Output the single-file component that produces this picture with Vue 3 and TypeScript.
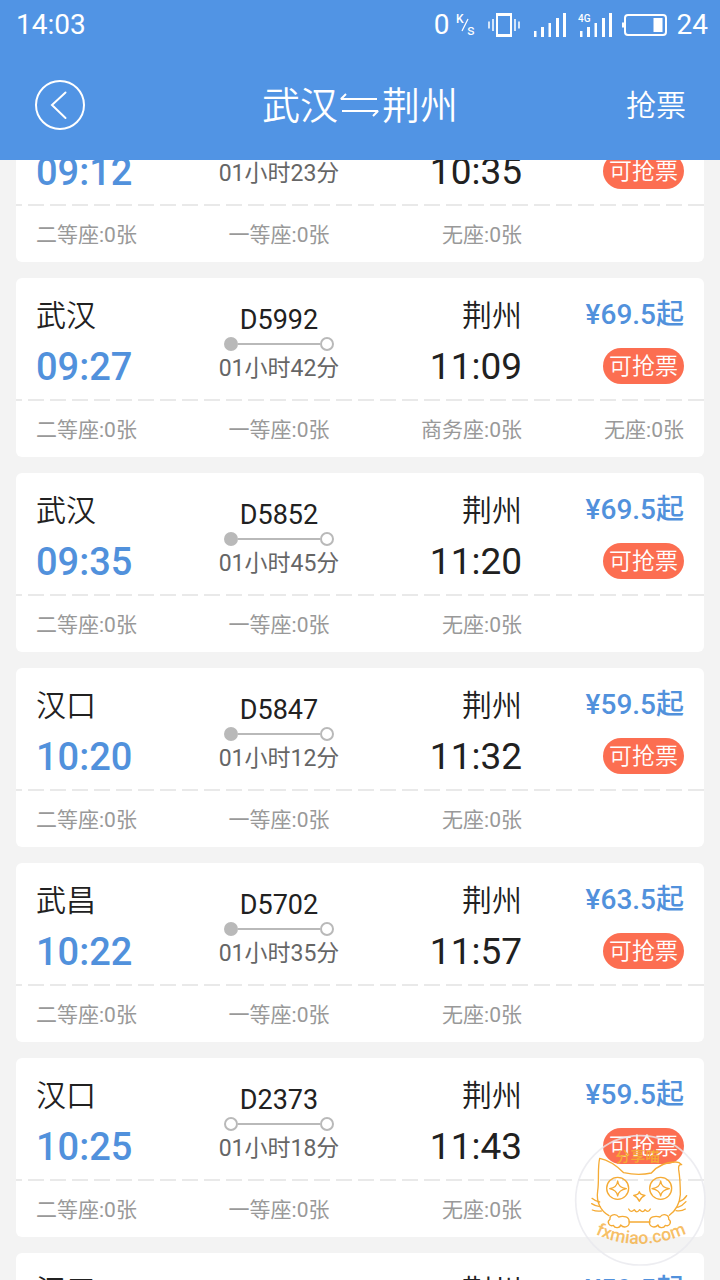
<script setup lang="ts">
import { onMounted, ref } from 'vue'

interface Train {
  from: string
  depart: string
  code: string
  duration: string
  to: string
  arrive: string
  price: string
  seats: string[]
  startsHere: boolean
}

const common = ['二等座:0张', '一等座:0张', '无座:0张']

const trains: Train[] = [
  { from: '武汉', depart: '09:12', code: 'D5986', duration: '01小时23分', to: '荆州', arrive: '10:35', price: '69.5', seats: common, startsHere: true },
  { from: '武汉', depart: '09:27', code: 'D5992', duration: '01小时42分', to: '荆州', arrive: '11:09', price: '69.5', seats: ['二等座:0张', '一等座:0张', '商务座:0张', '无座:0张'], startsHere: true },
  { from: '武汉', depart: '09:35', code: 'D5852', duration: '01小时45分', to: '荆州', arrive: '11:20', price: '69.5', seats: common, startsHere: true },
  { from: '汉口', depart: '10:20', code: 'D5847', duration: '01小时12分', to: '荆州', arrive: '11:32', price: '59.5', seats: common, startsHere: true },
  { from: '武昌', depart: '10:22', code: 'D5702', duration: '01小时35分', to: '荆州', arrive: '11:57', price: '63.5', seats: common, startsHere: true },
  { from: '汉口', depart: '10:25', code: 'D2373', duration: '01小时18分', to: '荆州', arrive: '11:43', price: '59.5', seats: common, startsHere: false },
  { from: '汉口', depart: '10:31', code: 'D3073', duration: '01小时20分', to: '荆州', arrive: '11:51', price: '59.5', seats: common, startsHere: false },
]

const list = ref<HTMLElement | null>(null)
const initialScroll = 93

onMounted(() => {
  if (list.value) list.value.scrollTop = initialScroll
})
</script>

<template>
  <div class="app">
    <header class="header">
      <div class="status">
        <span class="clock">14:03</span>
        <div class="indicators">
          <span>0</span>
          <svg class="rate" width="20" height="26" viewBox="0 0 20 26">
            <text x="0" y="11" font-size="12" font-weight="500">K</text>
            <path d="M6 19 12 7" stroke="currentColor" stroke-width="1.3" />
            <text x="11" y="23" font-size="15">s</text>
          </svg>
          <svg class="vibrate" width="32" height="26" viewBox="0 0 32 26" fill="none" stroke="currentColor">
            <rect x="9" y="2" width="14" height="22" stroke-width="2" />
            <path d="M8 2.500h16M8 23.500h16" stroke-width="3" />
            <path d="M1 9.500v7M5 7v12M27 7v12M31 9.500v7" stroke-width="1.500" />
          </svg>
          <svg class="signal" width="32" height="26" viewBox="0 0 32 26" fill="currentColor">
            <path d="M0 19h2.500v6H0zM7 15h3v10H7zM14.500 11h2.500v14h-2.500zM22 6h3v19h-3zM29 1h3v24h-3z" />
          </svg>
          <svg class="signal-4g" width="34" height="26" viewBox="0 0 34 26" fill="currentColor">
            <path d="M2 19h2.500v6H2zM9 15h3v10H9zM16.500 11h2.500v14h-2.500zM24 6h3v19h-3zM31 1h3v24h-3z" />
            <text x="0" y="10" font-size="10" font-weight="500">4G</text>
          </svg>
          <svg class="battery" width="46" height="24" viewBox="0 0 46 24">
            <rect x="3" y="2" width="41" height="20" rx="3" fill="none" stroke="currentColor" stroke-width="2" />
            <path d="M0 9.500h2v5H0zM31.500 5h9v14h-9z" fill="currentColor" />
          </svg>
          <span>24</span>
        </div>
      </div>
      <nav class="nav">
        <button class="back" type="button" aria-label="返回">
          <svg width="52" height="52" viewBox="0 0 52 52" fill="none" stroke="currentColor" stroke-width="2">
            <circle cx="26" cy="26" r="24" />
            <path d="M31.500 13.500 18 26l13.500 13" stroke-linecap="round" />
          </svg>
        </button>
        <h1 class="title">
          <span>武汉</span>
          <svg width="40" height="26" viewBox="0 0 40 26" fill="none" stroke="currentColor" stroke-width="2" stroke-linejoin="bevel">
            <path d="M37 6H1L6 1M2 18h36l-5 5" />
          </svg>
          <span>荆州</span>
        </h1>
        <button class="grab" type="button">抢票</button>
      </nav>
    </header>

    <main ref="list" class="list">
      <article v-for="train in trains" :key="train.depart" class="card">
        <div class="trip">
          <div class="stop">
            <div class="city">{{ train.from }}</div>
            <div class="time depart">{{ train.depart }}</div>
          </div>
          <div class="route">
            <div class="code">{{ train.code }}</div>
            <div class="track">
              <i class="dot" :class="{ filled: train.startsHere }"></i>
              <i class="rail"></i>
              <i class="dot"></i>
            </div>
            <div class="duration">{{ train.duration }}</div>
          </div>
          <div class="stop end">
            <div class="city">{{ train.to }}</div>
            <div class="time arrive">{{ train.arrive }}</div>
          </div>
          <div class="fare">
            <div class="price">¥{{ train.price }}起</div>
            <button class="badge" type="button">可抢票</button>
          </div>
        </div>
        <div class="divider"></div>
        <div class="seats">
          <span v-for="seat in train.seats" :key="seat">{{ seat }}</span>
        </div>
      </article>
    </main>

    <svg class="mascot" width="160" height="160" viewBox="0 0 480 480" fill="none" stroke="#f5ab35" stroke-width="4" stroke-linecap="round" stroke-linejoin="round" aria-hidden="true">
      <defs>
        <path id="mascot-top" d="M168 129Q238 120 330 129" />
        <path id="mascot-bottom" d="M106 342Q240 404 390 336" />
      </defs>
      <circle cx="241" cy="241" r="194" stroke="#e9e9ee" stroke-opacity=".8" stroke-width="5" />
      <path d="M147 287C122 273 108 246 113 213C118 180 112 145 119 115C145 120 169 136 191 158Q235 168 274 159C294 136 319 126 345 126Q357 125 365 134Q354 132 356 149C360 174 361 200 361 224C359 252 347 272 328 286M208 306H270" />
      <circle cx="173" cy="205" r="33" />
      <circle cx="302" cy="205" r="33" />
      <path d="M173 183Q175 203 199 206Q176 210 173 228Q170 210 149 206Q171 203 173 183ZM302 183Q304 203 328 206Q305 210 302 228Q299 210 276 206Q300 203 302 183ZM238 215Q240 225 255 226Q243 231 238 244Q233 231 221 226Q236 225 238 215Z" />
      <path d="M206 267Q213 280 223 269Q230 282 239 269Q249 281 255 269Q264 280 271 267" />
      <path d="M176 291C168 279 148 283 150 298C139 306 148 321 160 316C165 326 180 324 182 315C193 327 211 319 207 303C208 291 191 286 176 291Z" />
      <path d="M300 291C308 279 328 283 326 298C337 306 328 321 316 316C311 326 296 324 294 315C283 327 265 319 269 303C268 291 285 286 300 291Z" />
      <path d="M96 235Q106 244 119 246M95 251Q107 259 120 260M97 270Q109 275 124 273M380 227Q373 239 358 245M378 245Q368 257 353 262M376 267Q364 275 348 272" />
      <g fill="#f5ab35" stroke="none">
        <text font-size="44" font-weight="500"><textPath href="#mascot-top">分享喵</textPath></text>
        <text font-size="53" font-weight="500" opacity=".75"><textPath href="#mascot-bottom">fxmiao.com</textPath></text>
      </g>
    </svg>
  </div>
</template>

<style>
body {
  margin: 0;
  background: #f3f3f3;
}
</style>

<style scoped>
.app {
  display: flex;
  flex-direction: column;
  height: 100vh;
  overflow: hidden;
  position: relative;
  background: #f3f3f3;
  color: #212121;
  font-family: Roboto, "Noto Sans CJK SC", sans-serif;
}

button {
  margin: 0;
  padding: 0;
  border: 0;
  background: none;
  color: inherit;
  font: inherit;
}

svg {
  display: block;
  flex: none;
}

.header {
  flex: none;
  background: #5194e4;
  color: #fff;
}

.status {
  display: flex;
  align-items: center;
  justify-content: space-between;
  height: 50px;
  padding: 0 12px 0 16px;
  font-size: 28px;
  line-height: 50px;
}

.indicators {
  display: flex;
  align-items: center;
}

.rate {
  margin-left: 6px;
  fill: currentColor;
}

.vibrate {
  margin-left: 12px;
}

.signal {
  margin-left: 14px;
}

.signal-4g {
  margin-left: 12px;
}

.battery {
  margin: 0 9px 0 10px;
}

.nav {
  display: grid;
  grid-template-columns: 1fr auto 1fr;
  align-items: center;
  height: 110px;
  padding: 0 34px;
}

.back {
  justify-self: start;
}

.title {
  display: flex;
  align-items: center;
  gap: 2px;
  margin: 0;
  padding-top: 2px;
  font-size: 38px;
  font-weight: 350;
  line-height: 56px;
}

.grab {
  justify-self: end;
  padding-top: 2px;
  font-size: 30px;
  font-weight: 350;
  line-height: 44px;
}

.list {
  flex: 1;
  min-height: 0;
  display: flex;
  flex-direction: column;
  gap: 16px;
  padding: 16px;
  overflow-y: auto;
  scrollbar-width: none;
}

.card {
  flex: none;
  border-radius: 6px;
  background: #fff;
}

.trip,
.seats {
  display: grid;
  grid-template-columns: repeat(4, 1fr);
  padding: 0 20px;
}

.trip {
  height: 121px;
}

.stop {
  display: flex;
  flex-direction: column;
  gap: 5px;
  padding-top: 16px;
}

.end {
  text-align: right;
}

.city {
  font-size: 30px;
  font-weight: 350;
  line-height: 44px;
}

.time {
  line-height: 48px;
}

.depart {
  color: #5191dc;
  font-size: 38px;
  font-weight: 500;
}

.arrive {
  font-size: 37px;
}

.route {
  display: flex;
  flex-direction: column;
  align-items: center;
  padding-top: 26px;
}

.code {
  font-size: 27px;
  line-height: 32px;
}

.track {
  display: flex;
  align-items: center;
  width: 110px;
  height: 16px;
}

.dot {
  box-sizing: border-box;
  width: 14px;
  height: 14px;
  border: 2px solid #b9b9b9;
  border-radius: 50%;
}

.filled {
  background: #b9b9b9;
}

.rail {
  flex: 1;
  height: 2px;
  background: #b9b9b9;
}

.duration {
  color: #666;
  font-size: 23px;
  line-height: 34px;
  white-space: nowrap;
}

.fare {
  display: flex;
  flex-direction: column;
  align-items: flex-end;
  gap: 13px;
  padding-top: 17px;
}

.price {
  color: #5191dc;
  font-size: 28px;
  font-weight: 500;
  line-height: 40px;
  white-space: nowrap;
}

.badge {
  padding: 2px 6px 0;
  border-radius: 18px;
  background: #fc6e51;
  color: #fff;
  font-size: 23px;
  font-weight: 350;
  line-height: 34px;
}

.divider {
  height: 2px;
  background: linear-gradient(90deg, #e9e9e9 0 6px, transparent 6px 12px, #e9e9e9 12px) repeat-x 0 0 / 22px 2px;
}

.seats {
  padding-top: 2px;
  color: #999;
  font-size: 21px;
  line-height: 54px;
  white-space: nowrap;
}

.seats span:nth-child(2) {
  text-align: center;
}

.seats span:nth-child(n + 3) {
  text-align: right;
}

.mascot {
  position: absolute;
  right: 0;
  bottom: 0;
  pointer-events: none;
}
</style>
